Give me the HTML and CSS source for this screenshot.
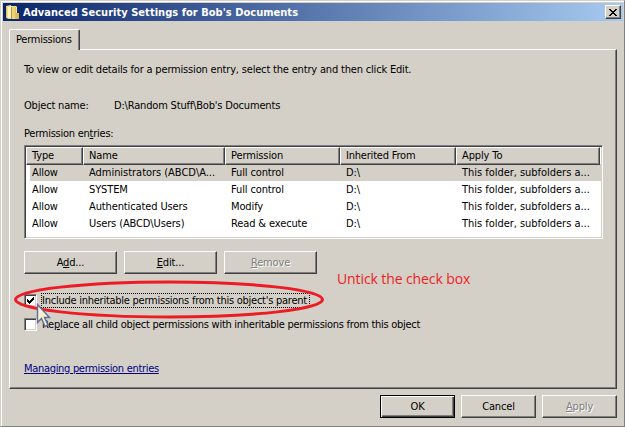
FILE: index.html
```
<!DOCTYPE html>
<html lang="en">
<head>
<meta charset="utf-8">
<title>Advanced Security Settings</title>
<link rel="stylesheet" href="styles.css">
</head>
<body>
<div class="window">
  <header class="titlebar">
    <svg class="folder" width="16" height="16" viewBox="0 0 16 16"><path d="M1 2l5-1v13l-2 1-3-1z" fill="#f3e08c"/><path d="M6 2h5l1 1v12H6z" fill="#f5e9a4"/><path d="M3 3l3-1v13l-3-1z" fill="#fbf3bf"/><path d="M7 3l3-1v12l-3 1z" fill="#ecd577"/><path d="M11 9h3v6h-4z" fill="#d9bb55"/><path d="M6.5 3v12" stroke="#b89532"/><path d="M1.500 3v11M10.500 3v11" stroke="#dcc05f"/></svg>
    <h1 class="title">Advanced Security Settings for Bob's Documents</h1>
    <button class="close" aria-label="Close"><svg width="8" height="7" viewBox="0 0 8 7" shape-rendering="crispEdges"><path d="M0 0h2v1h1v1h2V1h1V0h2v1H7v1H6v1H5v1h1v1h1v1h1v1H6V6H5V5H3v1H2v1H0V6h1V5h1V4h1V3H2V2H1V1H0z"/></svg></button>
  </header>
  <nav class="tabs"><div class="tab">Permissions</div></nav>
  <main class="panel">
    <p class="line intro">To view or edit details for a permission entry, select the entry and then click Edit.</p>
    <div class="line object"><span class="objlabel">Object name:</span><span class="objname">D:\Random Stuff\Bob's Documents</span></div>
    <p class="line label">Permission en<u>t</u>ries:</p>
    <div class="list">
      <div class="row head"><span>Type</span><span>Name</span><span>Permission</span><span class="inherited">Inherited From</span><span>Apply To</span></div>
      <div class="row selected"><span>Allow</span><span class="admin">Administrators (ABCD\A...</span><span>Full control</span><span>D:\</span><span class="scope">This folder, subfolders a...</span></div>
      <div class="row"><span>Allow</span><span>SYSTEM</span><span>Full control</span><span>D:\</span><span class="scope">This folder, subfolders a...</span></div>
      <div class="row"><span>Allow</span><span>Authenticated Users</span><span>Modify</span><span>D:\</span><span class="scope">This folder, subfolders a...</span></div>
      <div class="row"><span>Allow</span><span>Users (ABCD\Users)</span><span>Read &amp; execute</span><span>D:\</span><span class="scope">This folder, subfolders a...</span></div>
    </div>
    <div class="actions"><button class="btn">A<u>d</u>d...</button><button class="btn"><u>E</u>dit...</button><button class="btn off"><u>R</u>emove</button></div>
    <div class="check first"><span class="box"><svg width="7" height="7" viewBox="0 0 7 7" shape-rendering="crispEdges"><path d="M0 2h1v1h1v1h1V3h1V2h1V1h1V0h1v3H6v1H5v1H4v1H3v1H2V6H1V5H0z"/></svg></span><span class="focus">Include inheritable permissions from this object's parent</span></div>
    <div class="check"><span class="box"></span><span class="replace">Re<u>p</u>lace all child object permissions with inheritable permissions from this object</span></div>
    <a class="link">Managing permission entries</a>
  </main>
  <footer class="footer"><button class="btn ok">OK</button><button class="btn">Cancel</button><button class="btn off"><u>A</u>pply</button></footer>
  <svg class="ring" width="314" height="44" viewBox="0 0 314 44"><ellipse cx="157" cy="22.500" rx="153.500" ry="17.500" fill="none" stroke="#ed1c24" stroke-width="3"/></svg>
  <p class="note">Untick the check box</p>
  <svg class="cursor" width="16" height="26" viewBox="0 0 16 26"><path d="M1.500 1.500v18l4-4 3.500 8 3-1.500-3.500-7.500h5z" fill="#f4f2d6" stroke="#646c94" stroke-width="1.400"/></svg>
</div>
</body>
</html>
```
FILE: styles.css
```
* { box-sizing: border-box; }
body { margin: 0; background: #d4d0c8; font: 11px/13px "DejaVu Sans Condensed", "DejaVu Sans", sans-serif; color: #000; overflow: hidden; }
p, h1 { margin: 0; font-size: inherit; }
button { font: inherit; color: inherit; padding: 0; border-radius: 0; }
.window { position: relative; width: 625px; height: 427px; padding: 2px 1px 0 2px; border: 1px solid #d4d0c8; border-right-color: #808080; border-bottom-color: #808080; box-shadow: inset 1px 1px #fff; white-space: nowrap; }
.titlebar { display: flex; align-items: center; height: 18px; padding: 0 2px 0 2px; background: linear-gradient(90deg, #0a246a, #a6caf0); }
.title { flex: 1; margin-left: 2px; color: #fff; font-weight: bold; letter-spacing: 0.03px; }
.close { display: flex; width: 16px; height: 14px; align-items: center; justify-content: center; border: 1px solid; border-color: #fff #404040 #404040 #fff; box-shadow: inset -1px -1px #808080; background: #d4d0c8; }
.tabs { height: 28px; padding: 8px 0 0 6px; }
.tab { position: relative; z-index: 1; width: 71px; height: 21px; padding: 3px 0 0 6px; border: 1px solid; border-color: #fff #404040 transparent #fff; border-bottom: 0; border-radius: 2px 2px 0 0; box-shadow: inset -1px 0 #808080; background: #d4d0c8; letter-spacing: -0.25px; }
.panel { width: 608px; height: 340px; margin-left: 6px; padding: 13px 13px 0 14px; border: 1px solid; border-color: #fff #404040 #404040 #fff; box-shadow: inset -1px -1px #808080; }
.line { height: 13px; }
.intro { letter-spacing: -0.18px; }
.object { display: flex; margin-top: 23px; letter-spacing: -0.18px; }
.objlabel { width: 90px; }
.label { margin-top: 15px; letter-spacing: -0.25px; }
.list { width: 579px; height: 94px; margin-top: 5px; border: 1px solid; border-color: #808080 #fff #fff #808080; box-shadow: inset 1px 1px #404040, inset -1px -1px #d4d0c8; background: #fff; padding: 1px; }
.row { display: grid; grid-template-columns: 57px 142px 115px 116px 1fr; height: 17px; margin-left: 4px; line-height: 17px; padding-left: 2px; letter-spacing: -0.12px; }
.row .admin, .row .scope { letter-spacing: -0.03px; }
.row.selected { background: #d4d0c8; }
.row.head { margin: 0 1px 0 0; padding: 0; background: #d4d0c8; }
.row.head span { padding-left: 5px; border: 1px solid; border-color: #fff #404040 #404040 #fff; box-shadow: inset -1px -1px #808080; line-height: 16px; }
.row .inherited { letter-spacing: -0.2px; }
.actions { display: flex; gap: 7px; margin-top: 12px; }
.btn { width: 93px; height: 23px; border: 1px solid; border-color: #fff #404040 #404040 #fff; box-shadow: inset -1px -1px #808080; background: #d4d0c8; line-height: 20px; letter-spacing: -0.15px; }
.btn.off { color: #808080; text-shadow: 1px 1px #fff; }
.check { display: flex; height: 13px; margin-top: 11px; }
.check.first { margin-top: 20px; }
.box { display: flex; align-items: center; justify-content: center; width: 13px; height: 13px; margin-right: 5px; border: 1px solid; border-color: #808080 #fff #fff #808080; box-shadow: inset 1px 1px #404040, inset -1px -1px #d4d0c8; background: #fff; }
.focus { width: 267px; letter-spacing: -0.25px; outline: 1px dotted #000; }
.replace { letter-spacing: -0.27px; }
.link { display: block; width: max-content; margin-top: 31px; color: #000080; text-decoration: underline; letter-spacing: -0.31px; }
.footer { display: flex; justify-content: flex-end; gap: 6px; margin: 6px 6px 0 0; }
.footer .btn { width: 75px; }
.footer .ok { border-color: #000; box-shadow: inset 1px 1px #fff, inset -1px -1px #404040, inset -2px -2px #808080; }
.ring { position: absolute; left: 11px; top: 276px; }
.note { position: absolute; left: 336px; top: 268px; font: 14px/20px "Open Sans", sans-serif; letter-spacing: -0.1px; color: #ed1c24; }
.cursor { position: absolute; left: 35px; top: 302px; }
```
